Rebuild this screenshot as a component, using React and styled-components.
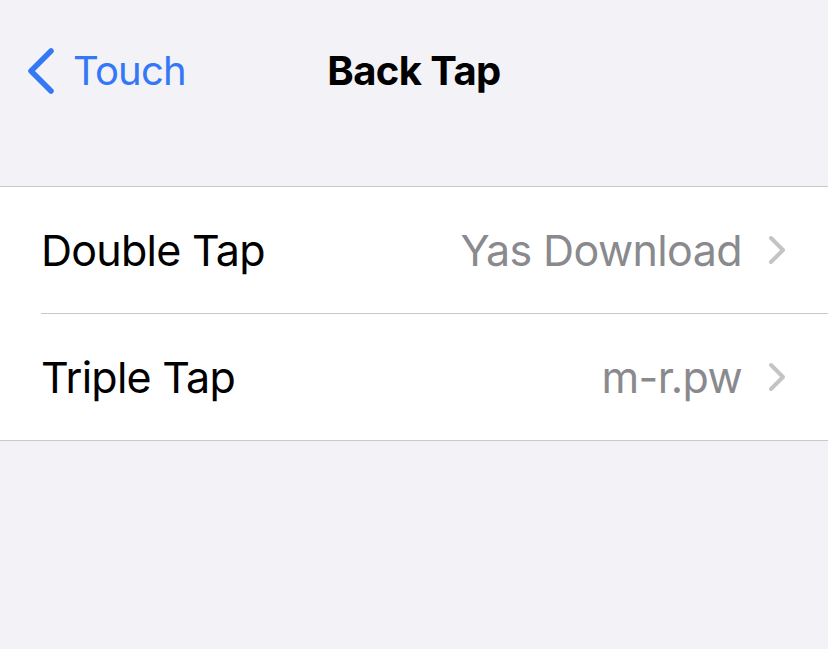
import React from "react";
import styled, { createGlobalStyle } from "styled-components";

const Global = createGlobalStyle`
  html, body { margin: 0; padding: 0; background: #f2f2f7; }
  body { font-family: Inter, "Liberation Sans", sans-serif; -webkit-font-smoothing: antialiased; }
`;

const Page = styled.div`
  width: 828px;
  height: 649px;
  background: #f2f2f7;
  display: flex;
  flex-direction: column;
`;

const NavBar = styled.div`
  height: 140px;
  box-sizing: border-box;
  padding-top: 46px;
  display: grid;
  grid-template-columns: 1fr auto 1fr;
  align-items: center;
  align-content: start;
`;

const BackButton = styled.div`
  display: flex;
  align-items: center;
  gap: 19px;
  margin-left: 27px;
  color: #3478f6;
  font-size: 40px;
  letter-spacing: -0.8px;
  height: 46px;
`;

const Title = styled.div`
  font-size: 40px;
  font-weight: 700;
  color: #000;
  letter-spacing: -0.6px;
`;

const Section = styled.div`
  margin-top: 46px;
  background: #fff;
  border-top: 1px solid #c8c7cc;
  border-bottom: 1px solid #c8c7cc;
`;

const Row = styled.div`
  display: flex;
  align-items: center;
  margin-left: 41px;
  padding-right: 41px;
  box-sizing: border-box;
  border-top: ${(p) => (p.$first ? "none" : "1px solid #c8c7cc")};
  height: ${(p) => (p.$first ? "126px" : "127px")};
`;

const Label = styled.div`
  flex: 1;
  font-size: 43px;
  color: #000;
  letter-spacing: -0.75px;
`;

const Value = styled.div`
  font-size: 43px;
  color: #8a8a8e;
  letter-spacing: -0.6px;
  margin-right: 25px;
`;

const Chevron = () => (
  <svg width="20" height="32" viewBox="0 0 20 32">
    <path d="M4 4 L16 16 L4 28" fill="none" stroke="#c4c4c7" strokeWidth="4" strokeLinecap="round" strokeLinejoin="round" />
  </svg>
);

const BackChevron = () => (
  <svg width="27" height="46" viewBox="0 0 27 46">
    <path d="M24 3 L4 23 L24 43" fill="none" stroke="#3478f6" strokeWidth="5.5" strokeLinecap="round" strokeLinejoin="round" />
  </svg>
);

export default function App() {
  return (
    <Page>
      <Global />
      <NavBar>
        <BackButton>
          <BackChevron />
          Touch
        </BackButton>
        <Title>Back Tap</Title>
        <div />
      </NavBar>
      <Section>
        <Row $first>
          <Label>Double Tap</Label>
          <Value>Yas Download</Value>
          <Chevron />
        </Row>
        <Row>
          <Label>Triple Tap</Label>
          <Value>m-r.pw</Value>
          <Chevron />
        </Row>
      </Section>
    </Page>
  );
}
